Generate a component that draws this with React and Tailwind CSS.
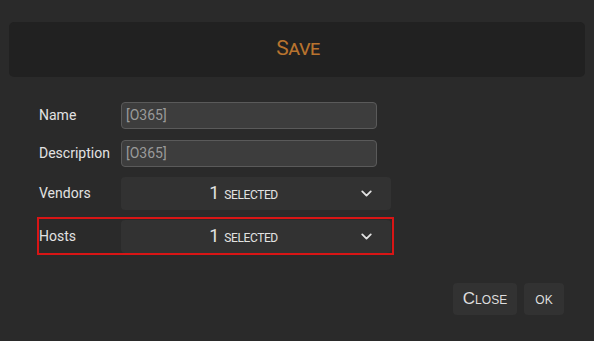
import React from 'react';
import { ChevronDown } from 'lucide-react';

function TextRow({ label, value }) {
    return (
        <div className="flex items-center w-[357px] border-2 border-transparent">
            <span className="w-[82px] text-[14px] text-[#e2e2e2]">{label}</span>
            <div className="w-[256px] h-[27px] flex items-center px-[4px] bg-[#3d3d3d] border border-[#5a5a5a] rounded-[4px] text-[14px] text-[#9a9a9a]">
                {value}
            </div>
        </div>
    );
}

function SelectRow({ label, highlighted }) {
    return (
        <div className={`flex items-center w-[357px] h-[38px] border-2 ${highlighted ? 'border-[#d81515]' : 'border-transparent'}`}>
            <span className="w-[82px] text-[14px] text-[#e2e2e2]">{label}</span>
            <div className="relative w-[270px] h-[33px] flex items-center justify-center bg-[#323232] rounded-[4px] text-[#e2e2e2]">
                <span className="flex items-baseline gap-[5px] mr-[25px]">
                    <span className="text-[18px] leading-none">1</span>
                    <span className="text-[12px] uppercase tracking-[-0.4px] leading-none">selected</span>
                </span>
                <ChevronDown className="absolute right-[16px] w-[17px] h-[17px]" strokeWidth={2.6} />
            </div>
        </div>
    );
}

export default function App() {
    return (
        <div className="w-[594px] h-[341px] bg-[#2a2a2a] overflow-hidden" style={{ fontFamily: 'Roboto, "Liberation Sans", sans-serif' }}>
            {/* Header */}
            <div className="mx-[9px] mt-[22px] h-[55px] rounded-[5px] bg-[#212121] flex items-center justify-center">
                <h1 className="text-[21px] text-[#b8732e] [font-variant:small-caps] tracking-[-0.5px] leading-none mt-[-2px] ml-[2px]">Save</h1>
            </div>

            {/* Form */}
            <div className="mt-[23px] pl-[37px] flex flex-col">
                <TextRow label="Name" value="[O365]" />
                <div className="mt-[7px]"><TextRow label="Description" value="[O365]" /></div>
                <div className="mt-[5px]"><SelectRow label="Vendors" /></div>
                <div className="mt-[5px]"><SelectRow label="Hosts" highlighted /></div>
            </div>

            {/* Buttons */}
            <div className="mt-[28px] pr-[30px] flex justify-end gap-[7px]" style={{ fontFamily: '"Liberation Sans", Arial, sans-serif' }}>
                <button className="w-[64px] h-[32px] rounded-[4px] bg-[#323232] text-[#dedede] text-[17px] [font-variant:small-caps]">Close</button>
                <button className="w-[40px] h-[32px] rounded-[4px] bg-[#323232] text-[#dedede] text-[17px] [font-variant:small-caps]">ok</button>
            </div>
        </div>
    );
}
